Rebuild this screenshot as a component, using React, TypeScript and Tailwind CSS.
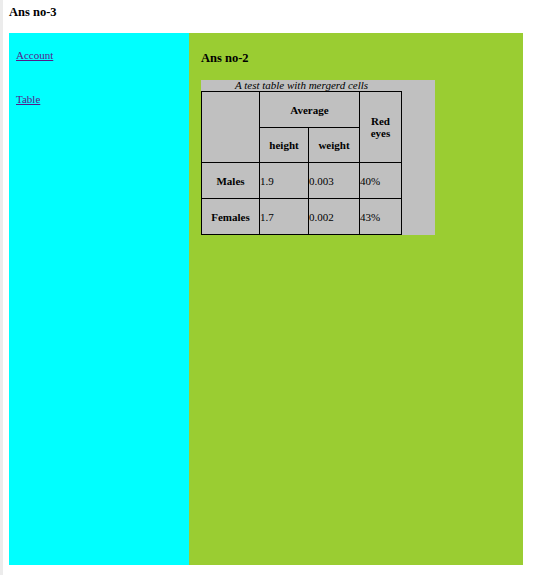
import React from "react";

const serif = { fontFamily: '"Liberation Serif", "Times New Roman", serif' };

export default function App() {
  const cell = "bg-[#c0c0c0] flex items-center";
  return (
    <div className="flex h-[575px] w-[538px] bg-white text-black" style={serif}>
      <div className="w-[3px] shrink-0 bg-[#ececec]" />
      <div className="flex flex-col pl-[6px]">
        <h1 className="h-[33px] pt-[5px] text-[12.5px] font-bold leading-[14px]">Ans no-3</h1>
        <div className="flex h-[532px]">
          <div className="flex w-[180px] flex-col items-start bg-[#00ffff] pl-[7px] pt-[16px] text-[11px] leading-[13px]">
            <a href="#" className="text-[#551a8b] underline">Account</a>
            <a href="#" className="mt-[31px] text-[#551a8b] underline">Table</a>
          </div>
          <div className="w-[334px] bg-[#9acd32] pl-[12px] pt-[18px]">
            <h2 className="text-[12.5px] font-bold leading-[14px]">Ans no-2</h2>
            <div className="mt-[15px] w-[234px] bg-[#c0c0c0]">
              <div className="h-[11px] w-[201px] text-center text-[11px] italic leading-[11px]">
                A test table with mergerd cells
              </div>
              <div className="grid w-[201px] grid-cols-[57px_48px_50px_41px] grid-rows-[35px_34px_35px_35px] gap-px bg-black p-px text-[11px] leading-[12px]">
                <div className={`${cell} row-span-2`} />
                <div className={`${cell} col-span-2 justify-center font-bold`}>Average</div>
                <div className={`${cell} row-span-2 justify-center text-center font-bold`}>Red<br />eyes</div>
                <div className={`${cell} justify-center font-bold`}>height</div>
                <div className={`${cell} justify-center font-bold`}>weight</div>
                <div className={`${cell} justify-center font-bold`}>Males</div>
                <div className={cell}>1.9</div>
                <div className={cell}>0.003</div>
                <div className={cell}>40%</div>
                <div className={`${cell} justify-center font-bold`}>Females</div>
                <div className={cell}>1.7</div>
                <div className={cell}>0.002</div>
                <div className={cell}>43%</div>
              </div>
            </div>
          </div>
        </div>
      </div>
    </div>
  );
}
